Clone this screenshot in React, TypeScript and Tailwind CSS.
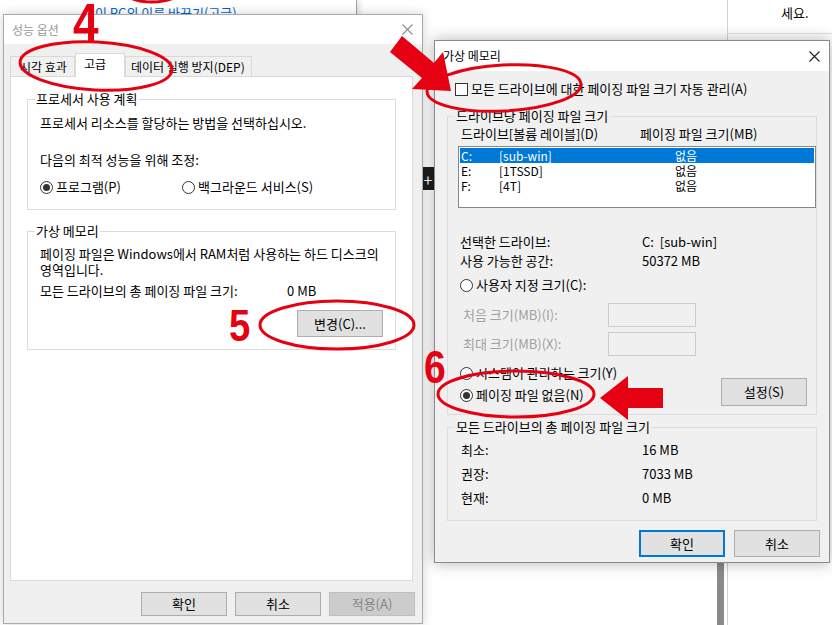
import React from "react";

const RED = "#e50012";

function CloseIcon({ color }: { color: string }) {
  return (
    <svg width="11" height="11" viewBox="0 0 11 11" className="block">
      <path d="M0.5 0.5 L10.5 10.5 M10.5 0.5 L0.5 10.5" stroke={color} strokeWidth="1.1" fill="none" />
    </svg>
  );
}

function Radio({ checked = false }: { checked?: boolean }) {
  return (
    <span className="flex h-[13px] w-[13px] shrink-0 items-center justify-center rounded-full border border-[#333333] bg-white">
      {checked && <span className="h-[7px] w-[7px] rounded-full bg-[#333333]" />}
    </span>
  );
}

type BtnProps = { label: string; h?: string; isDefault?: boolean; disabled?: boolean };

function Button({ label, h = "h-[27px]", isDefault, disabled }: BtnProps) {
  const skin = disabled
    ? "border border-[#bfbfbf] bg-[#cccccc] text-[#838383]"
    : isDefault
      ? "border-2 border-[#0078d7] bg-[#e1e1e1] text-black"
      : "border border-[#adadad] bg-[#e1e1e1] text-black";
  return <div className={`flex w-[86px] shrink-0 items-center justify-center ${h} ${skin}`}>{label}</div>;
}

function Group({ title, className = "", children }: { title: string; className?: string; children: React.ReactNode }) {
  return (
    <fieldset className={`border border-[#dcdcdc] ${className}`}>
      <legend className="ml-[7px] px-[1px] leading-[16px]">{title}</legend>
      {children}
    </fieldset>
  );
}

function PerformanceOptions() {
  return (
    <div className="absolute left-[3px] top-[14px] flex h-[610px] w-[420px] flex-col border border-[#aaaaaa] shadow-[0_0_10px_rgba(0,0,0,0.18)]">
      <div className="flex h-[29px] items-center justify-between bg-white pl-[8px] pr-[9px] text-[12px] text-[#999999]">
        <span>성능 옵션</span>
        <CloseIcon color="#8c8c8c" />
      </div>
      <div className="flex flex-1 flex-col bg-[#f0f0f0] pl-[6px] pr-[9px] pt-[9px]">
        <div className="relative z-10 -mb-px flex items-end whitespace-nowrap text-[12px]">
          <div className="h-[21px] w-[65px] border border-[#d9d9d9] bg-[#f0f0f0] pl-[9px] leading-[19px]">시각 효과</div>
          <div className="h-[24px] w-[50px] border-x border-t border-[#d9d9d9] bg-white pl-[8px] leading-[20px]">고급</div>
          <div className="h-[21px] w-[127px] border border-[#d9d9d9] bg-[#f0f0f0] pl-[5px] leading-[19px]">데이터 실행 방지(DEP)</div>
        </div>
        <div className="h-[505px] border border-[#d9d9d9] bg-white px-[16px]">
          <Group title="프로세서 사용 계획" className="mt-[14px]">
            <div className="pb-[14px] pl-[12px]">
              <div className="mt-[8px]">프로세서 리소스를 할당하는 방법을 선택하십시오.</div>
              <div className="mt-[21px]">다음의 최적 성능을 위해 조정:</div>
              <div className="mt-[11px] flex">
                <div className="flex w-[142px] items-center gap-[3px]">
                  <Radio checked />
                  <span>프로그램(P)</span>
                </div>
                <div className="flex items-center gap-[3px]">
                  <Radio />
                  <span>백그라운드 서비스(S)</span>
                </div>
              </div>
            </div>
          </Group>
          <Group title="가상 메모리" className="mt-[13px]">
            <div className="pb-[12px] pl-[12px] pr-[12px]">
              <div className="mt-[7px]">
                페이징 파일은 Windows에서 RAM처럼 사용하는 하드 디스크의
                <br />
                영역입니다.
              </div>
              <div className="mt-[5px] flex">
                <span className="w-[247px]">모든 드라이브의 총 페이징 파일 크기:</span>
                <span>0 MB</span>
              </div>
              <div className="mt-[11px] flex justify-end">
                <Button label="변경(C)..." />
              </div>
            </div>
          </Group>
        </div>
        <div className="mt-[11px] -mr-[2px] flex justify-end gap-[8px]">
          <Button label="확인" h="h-[24px]" />
          <Button label="취소" h="h-[24px]" />
          <Button label="적용(A)" h="h-[24px]" disabled />
        </div>
      </div>
    </div>
  );
}

const DRIVES = [
  { letter: "C:", label: "[sub-win]", size: "없음", selected: true },
  { letter: "E:", label: "[1TSSD]", size: "없음", selected: false },
  { letter: "F:", label: "[4T]", size: "없음", selected: false },
];

function VirtualMemory() {
  return (
    <div className="absolute left-[434px] top-[40px] flex h-[523px] w-[396px] flex-col border border-[#8a8a8a] shadow-[0_0_14px_rgba(0,0,0,0.3)]">
      <div className="flex h-[30px] items-center justify-between bg-white pl-[8px] pr-[9px] text-[12px] text-black">
        <span>가상 메모리</span>
        <CloseIcon color="#222222" />
      </div>
      <div className="flex flex-1 flex-col bg-[#f0f0f0] px-[12px] pt-[10px]">
        <div className="flex h-[16px] items-center gap-[3px] pl-[8px]">
          <span className="h-[13px] w-[13px] shrink-0 border border-[#333333] bg-white" />
          <span>모든 드라이브에 대한 페이징 파일 크기 자동 관리(A)</span>
        </div>

        <Group title="드라이브당 페이징 파일 크기" className="mt-[11px]">
          <div className="pb-[8px]">
            <div className="mt-[2px] flex pl-[13px]">
              <span className="w-[179px]">드라이브[볼륨 레이블](D)</span>
              <span>페이징 파일 크기(MB)</span>
            </div>
            <div className="ml-[10px] mt-[4px] h-[62px] border border-[#828790] bg-white p-px text-[12px]">
              {DRIVES.map((d) => (
                <div
                  key={d.letter}
                  className={`flex h-[15px] items-center pl-px leading-[15px] ${d.selected ? "bg-[#0078d7] text-white" : "text-black"}`}
                >
                  <span className="w-[38px]">{d.letter}</span>
                  <span className="w-[176px]">{d.label}</span>
                  <span>{d.size}</span>
                </div>
              ))}
            </div>

            <div className="mt-[24px] flex h-[19px] items-center pl-[12px]">
              <span className="w-[182px]">선택한 드라이브:</span>
              <span>C:&nbsp;&nbsp;[sub-win]</span>
            </div>
            <div className="flex h-[19px] items-center pl-[12px]">
              <span className="w-[182px]">사용 가능한 공간:</span>
              <span>50372 MB</span>
            </div>

            <div className="mt-[7px] flex items-center gap-[3px] pl-[12px]">
              <Radio />
              <span>사용자 지정 크기(C):</span>
            </div>
            <div className="mt-[10px] flex h-[24px] items-center pl-[15px] text-[#a0a0a0]">
              <span className="w-[145px]">처음 크기(MB)(I):</span>
              <span className="h-[24px] w-[88px] border border-[#cccccc] bg-[#f0f0f0]" />
            </div>
            <div className="mt-[5px] flex h-[24px] items-center pl-[15px] text-[#a0a0a0]">
              <span className="w-[145px]">최대 크기(MB)(X):</span>
              <span className="h-[24px] w-[88px] border border-[#cccccc] bg-[#f0f0f0]" />
            </div>

            <div className="mt-[9px] flex items-start justify-between pl-[12px] pr-[9px]">
              <div className="flex flex-col gap-[6px]">
                <div className="flex items-center gap-[3px]">
                  <Radio />
                  <span>시스템이 관리하는 크기(Y)</span>
                </div>
                <div className="flex items-center gap-[3px]">
                  <Radio checked />
                  <span>페이징 파일 없음(N)</span>
                </div>
              </div>
              <div className="mt-[13px]">
                <Button label="설정(S)" h="h-[28px]" />
              </div>
            </div>
          </div>
        </Group>

        <Group title="모든 드라이브의 총 페이징 파일 크기" className="mt-[4px]">
          <div className="mt-[3px] pb-[10px] pl-[13px]">
            {[
              ["최소:", "16 MB"],
              ["권장:", "7033 MB"],
              ["현재:", "0 MB"],
            ].map(([k, v]) => (
              <div key={k} className="flex h-[24px] items-center">
                <span className="w-[181px]">{k}</span>
                <span>{v}</span>
              </div>
            ))}
          </div>
        </Group>

        <div className="mt-[9px] -mr-[3px] flex justify-end gap-[9px]">
          <Button label="확인" isDefault />
          <Button label="취소" />
        </div>
      </div>
    </div>
  );
}

function Annotations() {
  return (
    <>
      <svg className="pointer-events-none absolute inset-0 z-20" width="832" height="625" viewBox="0 0 832 625">
        <g fill="none" stroke={RED} strokeWidth="3">
          <ellipse cx="152" cy="-18" rx="36" ry="20" />
          <ellipse cx="96" cy="66" rx="76" ry="24" transform="rotate(3 96 66)" />
          <ellipse cx="337" cy="325" rx="77" ry="24" />
          <ellipse cx="504" cy="88" rx="77" ry="23" transform="rotate(-3 504 88)" />
          <ellipse cx="516" cy="394" rx="78" ry="23" />
        </g>
        <g fill={RED}>
          <polygon points="402,36 434,63 443,52 451,91 412,89 422,78 390,52" />
          <polygon points="600,398 628,376 628,388 663,388 663,408 628,408 628,420" />
        </g>
      </svg>
      <span className="pointer-events-none absolute left-[73px] top-[-5px] z-20 origin-left scale-x-85 font-['Liberation_Sans',sans-serif] text-[54px] font-bold leading-none text-[#e50012]">
        4
      </span>
      <span className="pointer-events-none absolute left-[229px] top-[303px] z-20 origin-left scale-x-85 font-['Liberation_Sans',sans-serif] text-[45px] font-bold leading-none text-[#e50012]">
        5
      </span>
      <span className="pointer-events-none absolute left-[424px] top-[344px] z-20 origin-left scale-x-85 font-['Liberation_Sans',sans-serif] text-[46px] font-bold leading-none text-[#e50012]">
        6
      </span>
    </>
  );
}

export default function App() {
  return (
    <div className="relative h-[625px] w-[832px] overflow-hidden bg-white font-['Noto_Sans_CJK_KR','Noto_Sans',sans-serif] text-[13px] leading-[16px] text-black">
      {/* background windows */}
      <div className="absolute left-0 top-0 h-[60px] w-[357px] border-r border-[#a0a0a0] bg-white pl-[95px] pt-[5px] text-[#0066cc] shadow-[3px_0_5px_rgba(0,0,0,0.12)]">
        이 PC의 이름 바꾸기(고급)
      </div>
      <div className="absolute left-[727px] top-0 h-[625px] w-[105px] border-l border-[#d4d4d4] bg-white">
        <div className="flex h-[34px] items-center border-b border-[#e0e0e0] pl-[53px] pb-[8px]">세요.</div>
      </div>
      <div className="absolute left-[717px] top-[560px] h-[65px] w-[7px] bg-[#8a8a8a]" />
      <div className="absolute left-[421px] top-[167px] flex h-[23px] w-[14px] items-center justify-center bg-[#1e1e1e] text-[16px] text-white">
        +
      </div>

      <PerformanceOptions />
      <VirtualMemory />
      <Annotations />
    </div>
  );
}
